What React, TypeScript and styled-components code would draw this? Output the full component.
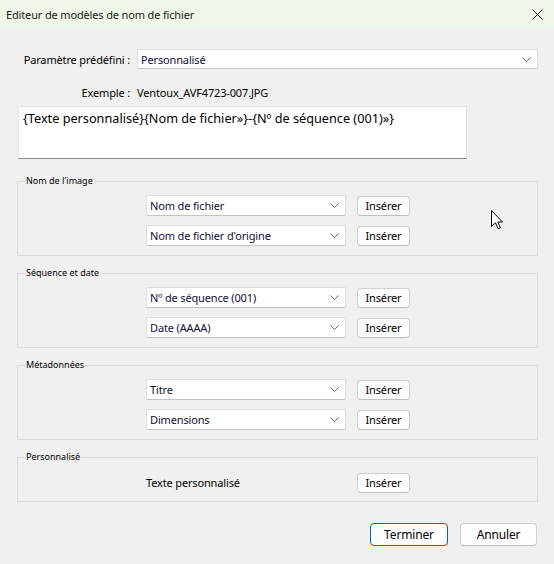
import styled, { createGlobalStyle } from "styled-components";

const GlobalStyle = createGlobalStyle`
  html, body {
    margin: 0;
    background: #f0f0f0;
  }
  body {
    font-family: "Noto Sans", "Liberation Sans", sans-serif;
    font-size: 11px;
    letter-spacing: -0.15px;
    color: #000;
  }
`;

const Window = styled.div`
  position: relative;
  width: 554px;
  height: 564px;
  display: flex;
  flex-direction: column;
  background: #f0f0f0;
  overflow: hidden;
`;

const TitleBar = styled.div`
  height: 28px;
  flex: none;
  display: flex;
  align-items: center;
  justify-content: space-between;
  padding: 0 11px 0 6px;
  background: #eef7e9;
  color: #1b1b1b;
  font-size: 11px;
`;

const Content = styled.div`
  display: flex;
  flex-direction: column;
  padding: 21px 16px 0 17px;
`;

const FormRow = styled.div<{ $top?: number }>`
  display: grid;
  grid-template-columns: 120px 1fr;
  align-items: center;
  min-height: 16px;
  margin-top: ${(p) => p.$top ?? 0}px;
`;

const RowLabel = styled.span`
  text-align: right;
  padding-right: 7px;
  white-space: nowrap;
`;

const Combo = styled.div<{ $width?: number }>`
  box-sizing: border-box;
  display: flex;
  align-items: center;
  justify-content: space-between;
  height: ${(p) => (p.$width ? 21 : 20)}px;
  width: ${(p) => (p.$width ? `${p.$width}px` : "auto")};
  padding: 0 6px 0 3px;
  background: #fff;
  border: 1px solid #dedede;
  border-bottom-color: #c4c4c4;
  border-radius: 2px;
  white-space: nowrap;
  color: #10103a;
`;

const Chevron = () => (
  <svg width="9" height="5" viewBox="0 0 9 5">
    <path d="M0.5 0.5 L4.5 4.5 L8.5 0.5" fill="none" stroke="#6d6d6d" strokeWidth="1" />
  </svg>
);

const ExampleValue = styled.span`
  padding-left: 0;
`;

const PatternBox = styled.div`
  box-sizing: border-box;
  width: 449px;
  height: 53px;
  margin: 6px 0 0 1px;
  padding: 2px 4px;
  background: #fff;
  border: 1px solid #e4e4e4;
  border-bottom-color: #8c8c8c;
  font-size: 12.7px;
  line-height: 18px;
  letter-spacing: 0;
`;

const Groups = styled.div`
  display: flex;
  flex-direction: column;
  gap: 11px;
  margin-top: 16px;
`;

const Group = styled.fieldset`
  margin: 0;
  padding: 0;
  border: 1px solid #dcdcdc;
  min-width: 0;
`;

const Legend = styled.legend`
  margin-left: 7px;
  padding: 0 1px;
  font-size: 9px;
  line-height: 12px;
  letter-spacing: 0;
`;

const GroupRows = styled.div<{ $single?: boolean }>`
  display: flex;
  flex-direction: column;
  gap: 9px;
  padding: ${(p) => (p.$single ? "9px 0 8px 128px" : "8px 0 9px 128px")};
`;

const InsertRow = styled.div`
  display: flex;
  align-items: center;
  gap: 11px;
  height: 21px;
`;

const FieldText = styled.span`
  width: 200px;
`;

const Button = styled.button<{ $primary?: boolean; $w: number; $h: number; $size?: number }>`
  box-sizing: border-box;
  width: ${(p) => p.$w}px;
  height: ${(p) => p.$h}px;
  padding: 0;
  font-family: inherit;
  font-size: ${(p) => p.$size ?? 11}px;
  letter-spacing: inherit;
  color: #000;
  background: #fdfdfd;
  border: 1px solid ${(p) => (p.$primary ? "#0067c0" : "#d0d0d0")};
  border-bottom-color: ${(p) => (p.$primary ? "#0067c0" : "#bdbdbd")};
  border-radius: 4px;
`;

const Footer = styled.div`
  display: flex;
  justify-content: flex-end;
  gap: 12px;
  margin-top: 21px;
  padding-right: 1px;
`;

const Pointer = styled.svg`
  position: absolute;
  left: 491px;
  top: 210px;
`;

type Field = { value: string };

const groups: { title: string; fields: Field[] }[] = [
  { title: "Nom de l'image", fields: [{ value: "Nom de fichier" }, { value: "Nom de fichier d'origine" }] },
  { title: "Séquence et date", fields: [{ value: "Nº de séquence (001)" }, { value: "Date (AAAA)" }] },
  { title: "Métadonnées", fields: [{ value: "Titre" }, { value: "Dimensions" }] },
];

export default function App() {
  return (
    <Window>
      <GlobalStyle />
      <TitleBar>
        <span>Editeur de modèles de nom de fichier</span>
        <svg width="11" height="11" viewBox="0 0 11 11">
          <path d="M0.5 0.5 L10.5 10.5 M10.5 0.5 L0.5 10.5" stroke="#1b1b1b" strokeWidth="1" />
        </svg>
      </TitleBar>

      <Content>
        <FormRow>
          <RowLabel>Paramètre prédéfini :</RowLabel>
          <Combo>
            <span>Personnalisé</span>
            <Chevron />
          </Combo>
        </FormRow>

        <FormRow $top={15}>
          <RowLabel>Exemple :</RowLabel>
          <ExampleValue>Ventoux_AVF4723-007.JPG</ExampleValue>
        </FormRow>

        <PatternBox>{"{Texte personnalisé}{Nom de fichier»}-{Nº de séquence (001)»}"}</PatternBox>

        <Groups>
          {groups.map((g) => (
            <Group key={g.title}>
              <Legend>{g.title}</Legend>
              <GroupRows>
                {g.fields.map((f) => (
                  <InsertRow key={f.value}>
                    <Combo $width={200}>
                      <span>{f.value}</span>
                      <Chevron />
                    </Combo>
                    <Button $w={53} $h={20}>Insérer</Button>
                  </InsertRow>
                ))}
              </GroupRows>
            </Group>
          ))}
          <Group>
            <Legend>Personnalisé</Legend>
            <GroupRows $single>
              <InsertRow>
                <FieldText>Texte personnalisé</FieldText>
                <Button $w={53} $h={20}>Insérer</Button>
              </InsertRow>
            </GroupRows>
          </Group>
        </Groups>

        <Footer>
          <Button $primary $w={78} $h={23} $size={12}>Terminer</Button>
          <Button $w={77} $h={23} $size={12}>Annuler</Button>
        </Footer>
      </Content>

      <Pointer width="13" height="20" viewBox="0 0 13 20">
        <path
          d="M0.5 0.5 V16.5 L4.5 12.8 L7.2 18.8 L9.4 17.8 L6.8 12 H11.5 Z"
          fill="#fff"
          stroke="#000"
          strokeWidth="1"
          strokeLinejoin="round"
        />
      </Pointer>
    </Window>
  );
}
